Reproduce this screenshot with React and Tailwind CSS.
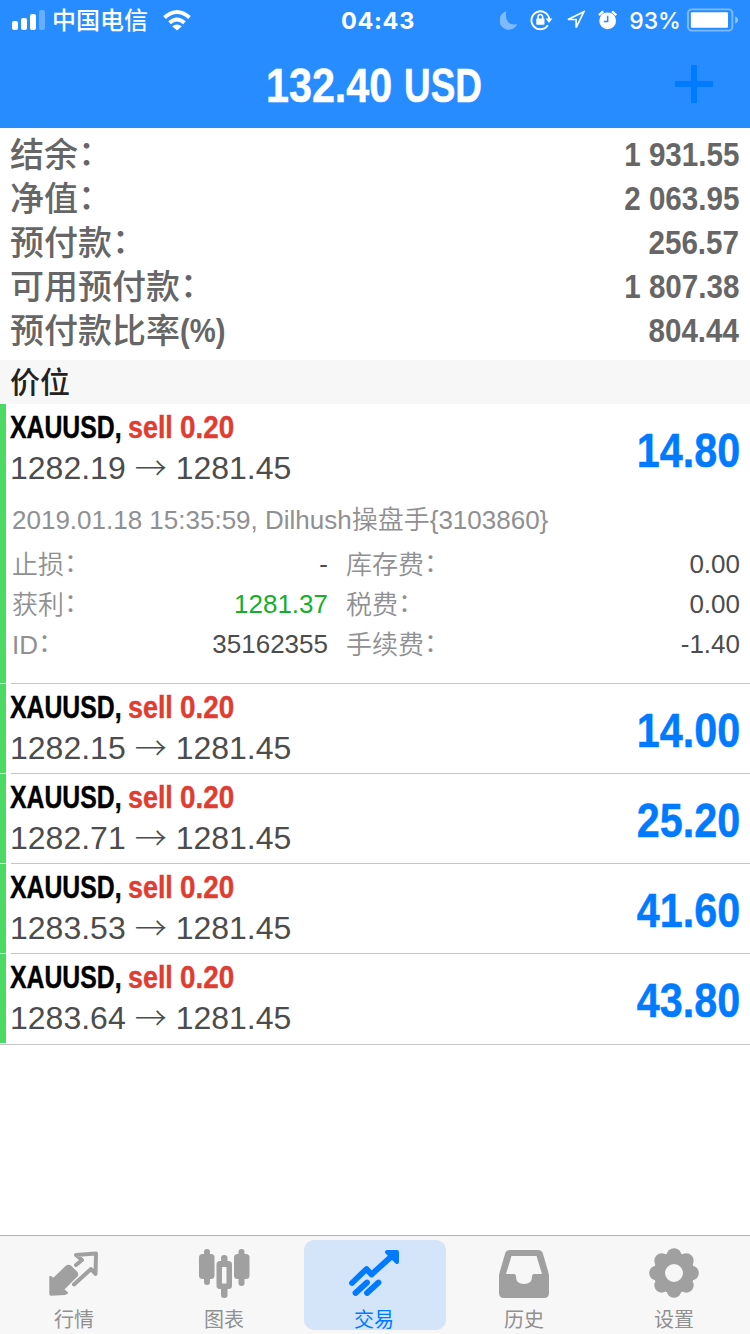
import React from 'react';

const summary = [
  { label: '结余', colon: true, value: '1 931.55' },
  { label: '净值', colon: true, value: '2 063.95' },
  { label: '预付款', colon: true, value: '256.57' },
  { label: '可用预付款', colon: true, value: '1 807.38' },
  { label: '预付款比率', suffix: '(%)', value: '804.44' },
];

const positions = [
  {
    open: '1282.19',
    profit: '14.80',
    details: {
      comment: '2019.01.18 15:35:59, Dilhush操盘手{3103860}',
      rows: [
        ['止损', '-', '库存费', '0.00'],
        ['获利', '1281.37', '税费', '0.00'],
        ['ID', '35162355', '手续费', '-1.40'],
      ],
    },
  },
  { open: '1282.15', profit: '14.00' },
  { open: '1282.71', profit: '25.20' },
  { open: '1283.53', profit: '41.60' },
  { open: '1283.64', profit: '43.80' },
];

const QuotesIcon = () => (
  <svg className="shrink-0" width="52" height="50" viewBox="0 0 52 50" fill="#a0a0a0" stroke="#a0a0a0" strokeLinejoin="round">
    <path
      d="M2.300 28.700L5.500 31 18.500 18.500Q20.500 17 22.500 18.500L28.500 24.500Q30 26.500 28.500 28L15 41.500 19 44.800 17 46 3 46.800 2.300 46z"
      strokeWidth="2"
    />
    <path
      d="M28 17l6-5-6-5 20-1.500-.5 20.500-4.500-5L26 36.500"
      fill="none"
      strokeWidth="4"
      strokeLinecap="round"
    />
  </svg>
);

const ChartIcon = () => (
  <svg className="shrink-0" width="52" height="50" viewBox="0 0 52 50" fill="#a0a0a0">
    <rect x="6" y="1" width="6" height="36" rx="3" />
    <rect x="1" y="6" width="15.500" height="25" rx="3.500" />
    <rect x="40.500" y="1" width="6" height="37" rx="3" />
    <rect x="36" y="6" width="15.500" height="25" rx="3.500" />
    <rect x="23" y="7" width="6.500" height="11" rx="3" />
    <rect x="23" y="36" width="6.500" height="14" rx="3" />
    <path
      fillRule="evenodd"
      d="M22 13h8.500q3.500 0 3.500 3.500v21q0 3.500-3.500 3.500H22q-3.500 0-3.500-3.500v-21q0-3.500 3.500-3.500zm2 6v16.500h4.500V19z"
    />
  </svg>
);

const TradeIcon = () => (
  <svg className="shrink-0" width="52" height="50" viewBox="0 0 52 50" fill="none" stroke="#007aff" strokeLinecap="round">
    <path d="M4 35L18.500 21l5 5.500L45 7" strokeWidth="5.800" strokeLinejoin="round" />
    <path d="M39 4h10v10z" fill="#007aff" strokeWidth="4" strokeLinejoin="round" />
    <path d="M7.500 45L19 34.500M19 45L30.500 34.500" strokeWidth="5.800" />
  </svg>
);

const HistoryIcon = () => (
  <svg className="shrink-0" width="52" height="50" viewBox="0 0 52 50" fill="#a0a0a0">
    <path
      fillRule="evenodd"
      d="M12 2h28q4 0 5 4l5 17q1 3 1 6v16q0 5-5 5H6q-5 0-5-5V29q0-3 1-6L7 6q1-4 5-4zm1.500 6L8 26h8q2 0 2 3 0 7 8 7t8-7q0-3 2-3h8L38.500 8z"
    />
  </svg>
);

const SettingsIcon = () => (
  <svg className="shrink-0" width="52" height="50" viewBox="0 0 52 50" fill="#a0a0a0">
    <path
      fillRule="evenodd"
      d="M26 4.500a20.500 20.500 0 1 0 0 41a20.500 20.500 0 1 0 0-41zm0 11.500a9 9 0 1 1 0 18a9 9 0 1 1 0-18z"
    />
    {[0, 45, 90, 135, 180, 225, 270, 315].map((deg) => (
      <circle key={deg} cx="26" cy="7.500" r="7.300" transform={`rotate(${deg} 26 25)`} />
    ))}
  </svg>
);

const tabs = [
  { label: '行情', icon: QuotesIcon },
  { label: '图表', icon: ChartIcon },
  { label: '交易', icon: TradeIcon, active: true },
  { label: '历史', icon: HistoryIcon },
  { label: '设置', icon: SettingsIcon },
];

const StatusBar = () => (
  <div className="grid h-10 grid-cols-3 text-[24px] leading-9">
    <div className="flex h-10 items-center pl-3">
      <svg width="34" height="20" viewBox="0 0 34 20" fill="#fff">
        <rect x="0" y="11" width="6" height="9" rx="2" />
        <rect x="9" y="8" width="6" height="12" rx="2" />
        <rect x="18" y="4" width="6" height="16" rx="2" />
        <rect x="27" y="0" width="6" height="20" rx="2" opacity="0.3" />
      </svg>
      <span className="mt-[2px] ml-[6px] font-medium">中国电信</span>
      <svg className="ml-[15px]" width="28" height="21" viewBox="0 0 28 21" fill="none" stroke="#fff" strokeWidth="3.800">
        <path d="M1.500 7.500q12.500-11 25 0M6.500 12.800q7.500-6.500 15 0" />
        <path d="M14 20.500l-4.800-4.300q4.800-3.600 9.600 0z" fill="#fff" stroke="none" />
      </svg>
    </div>
    <div className="pt-[3px] pl-[6px] text-center font-['Inter'] text-[23.500px] font-bold tracking-[0.7px]">04:43</div>
    <div className="flex h-10 items-center justify-end pr-[11px]">
      <svg width="18" height="19" viewBox="0 0 18 19" fill="#fff" opacity="0.4">
        <path d="M6.500 0A9.700 9.700 0 1 0 18 13Q12 15 8.500 11T6.500 0z" />
      </svg>
      <svg className="ml-[13px]" width="24" height="22" viewBox="0 0 24 22" fill="none" stroke="#fff" strokeWidth="1.900">
        <path d="M18.500 16.500A9.300 9.300 0 1 1 20 10" />
        <path d="M16.200 9.500h7l-3.500 4.500z" fill="#fff" stroke="none" />
        <rect x="6.500" y="9.500" width="8.500" height="6.500" rx="0.800" fill="#fff" stroke="none" />
        <path d="M8.300 10V7.800a2.400 2.400 0 0 1 4.800 0V10" strokeWidth="1.600" />
      </svg>
      <svg className="ml-[12px]" width="20" height="20" viewBox="0 0 20 20" fill="none" stroke="#fff" strokeWidth="1.700">
        <path d="M18.500 1.500L2 9.500h8.500V18z" strokeLinejoin="miter" />
      </svg>
      <svg className="ml-[13px]" width="20" height="20" viewBox="0 0 20 20" fill="#fff">
        <circle cx="10" cy="10.800" r="8.700" />
        <path d="M1 5L5.500 1M19 5l-4.500-4" stroke="#fff" strokeWidth="2.400" />
        <path d="M10 5.500v6H6" stroke="#278cff" strokeWidth="1.600" fill="none" />
      </svg>
      <span className="mt-px ml-[12px] font-['Inter'] text-[23px] font-medium">93%</span>
      <svg className="ml-[6px]" width="54" height="24" viewBox="0 0 54 24" fill="none">
        <rect x="1" y="1" width="46" height="22" rx="4" stroke="#fff" strokeOpacity="0.4" strokeWidth="2" />
        <rect x="4" y="4" width="38.500" height="16" rx="1" fill="#fff" />
        <path d="M50 8q3 1.500 3 4t-3 4z" fill="#fff" fillOpacity="0.5" />
      </svg>
    </div>
  </div>
);

const DetailLabel = ({ children }) => (
  <span className="translate-y-px">
    {children}
    <span className="inline-block -translate-y-[2px]">：</span>
  </span>
);

const PositionRow = ({ open, profit, details, last }) => (
  <div className="flex">
    <div className={`mb-px w-[6px] shrink-0 bg-[#4cd964] ${details ? 'h-[279px]' : 'h-[89px]'}`} />
    <div className={`ml-[5px] flex-1 border-b ${last ? 'border-transparent' : 'border-[#c4c4c6]'}`}>
      <div className="-ml-px flex h-[89px] justify-between pr-[10px]">
        <div>
          <div className="flex h-[46px] text-[32px] leading-[46px] font-bold whitespace-nowrap [-webkit-text-stroke:0.4px]">
            <span className="w-[118px]">
              <span className="inline-block origin-left scale-x-[0.775] text-black">XAUUSD,</span>
            </span>
            <span className="w-[52px]">
              <span className="inline-block origin-left scale-x-[0.84] text-[#e03c31]">sell</span>
            </span>
            <span className="inline-block origin-left scale-x-[0.87] text-[#e03c31]">0.20</span>
          </div>
          <div className="flex h-9 items-center text-[32px] leading-9 text-[#4c4c4c]">
            <span>{open}</span>
            <span className="w-[50px] -translate-y-[2px] text-center font-['Noto_Sans_CJK_SC'] font-light">→</span>
            <span>1281.45</span>
          </div>
        </div>
        <div className="origin-right scale-x-[0.86] text-[48px] leading-[93px] font-bold text-[#007aff] [-webkit-text-stroke:0.5px]">
          {profit}
        </div>
      </div>
      {details && (
        <div className="h-[190px] pt-[7px] pr-[10px] pl-px text-[26px] font-[350] text-[#909092]">
          <div className="h-11 leading-[40px]">{details.comment}</div>
          {details.rows.map(([label, value, feeLabel, fee]) => (
            <div key={label} className="flex h-10 leading-10">
              <div className="flex w-[316px] justify-between">
                <DetailLabel>{label}</DetailLabel>
                <span className={value === '1281.37' ? 'text-[#16ae2b]' : 'text-[#4c4c4c]'}>{value}</span>
              </div>
              <div className="ml-[18px] flex flex-1 justify-between">
                <DetailLabel>{feeLabel}</DetailLabel>
                <span className="text-[#4c4c4c]">{fee}</span>
              </div>
            </div>
          ))}
        </div>
      )}
    </div>
  </div>
);

const App = () => {
  return (
    <div className="flex h-[1334px] w-[750px] flex-col overflow-hidden bg-white font-['Liberation_Sans','Noto_Sans_CJK_SC',sans-serif]">
      <header className="h-32 bg-[#278cff] text-white">
        <StatusBar />
        <div className="grid h-[88px] grid-cols-[94px_1fr_94px] items-center">
          <h1 className="col-start-2 flex pt-[3px] pl-[172px] text-[48px] leading-[85px] font-bold whitespace-nowrap [-webkit-text-stroke:0.5px]">
            <span className="w-[138px]">
              <span className="inline-block origin-left scale-x-[0.86]">132.40</span>
            </span>
            <span className="inline-block origin-left scale-x-[0.77]">USD</span>
          </h1>
          <svg className="ml-[18px]" width="40" height="40" viewBox="0 0 40 40" stroke="#007aff" strokeWidth="6">
            <path d="M1 20h38M20 1v38" />
          </svg>
        </div>
      </header>

      {/* Account summary */}
      <section className="h-[232px] pt-1 pr-[11px] pl-[10px] text-[34px] text-[#666]">
        {summary.map((item) => (
          <div key={item.label} className="flex h-11 justify-between leading-11">
            <span className="flex pt-px font-medium">
              {item.label}
              {item.colon && <span className="-translate-y-[2px]">：</span>}
              {item.suffix && (
                <span className="-mt-px origin-left scale-x-[0.86] font-bold">{item.suffix}</span>
              )}
            </span>
            <span className="origin-right scale-x-[0.87] font-bold">{item.value}</span>
          </div>
        ))}
      </section>

      <div className="h-11 bg-[#f7f7f7] pt-px pl-[10px] text-[30px] leading-11 font-medium text-[#222]">价位</div>

      <main className="flex-1">
        {positions.map((position, i) => (
          <PositionRow key={position.open} {...position} last={i === positions.length - 1} />
        ))}
        <div className="h-px bg-[#c4c4c6]" />
      </main>

      <nav className="flex h-[99px] border-t border-[#b2b2b2] bg-[#f7f7f7]">
        {tabs.map(({ label, icon: Icon, active }) => (
          <div
            key={label}
            className={`mx-1 mt-1 flex h-[90px] w-[142px] flex-col items-center rounded-[10px] pt-2 pr-[2px] text-[20px] ${
              active ? 'bg-[#d4e5f9] text-[#007aff]' : 'text-[#909090]'
            }`}
          >
            <Icon />
            <span className="mt-[10px] leading-6">{label}</span>
          </div>
        ))}
      </nav>
    </div>
  );
};

export default App;
